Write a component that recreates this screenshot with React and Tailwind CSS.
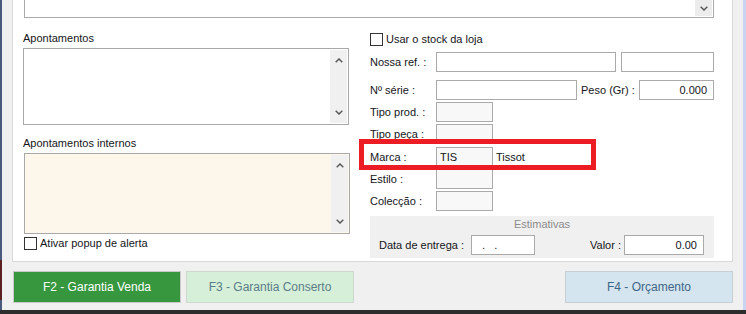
const Chevron = ({ dir = "down" }) => (
  <svg width="8" height="5" viewBox="0 0 8 5" className="block">
    <path
      d={dir === "down" ? "M0.7 0.7 L4 4 L7.3 0.7" : "M0.7 4.3 L4 1 L7.3 4.3"}
      fill="none"
      stroke="#5a5a5a"
      strokeWidth="1.5"
    />
  </svg>
);

const Scroll = () => (
  <div className="w-[17px] h-full bg-[#f0f0f0] flex flex-col items-center justify-between py-[8px]">
    <Chevron dir="up" />
    <Chevron />
  </div>
);

const Check = () => (
  <span className="w-[13px] h-[13px] border border-[#333] bg-white shrink-0" />
);

const Input = ({ w, children, right, gray }) => (
  <div
    className={`h-[20px] border border-[#aaaaaa] flex items-center shrink-0 ${
      gray ? "bg-[#f8f8f8]" : "bg-white"
    } ${right ? "justify-end pr-[6px]" : "pl-[3px]"}`}
    style={{ width: w }}
  >
    {children}
  </div>
);

const Row = ({ label, mt, children }) => (
  <div className={`flex items-center h-[20px] ${mt}`}>
    <span className="w-[66px] shrink-0">{label}</span>
    {children}
  </div>
);

export default function App() {
  return (
    <div className="w-[746px] h-[314px] flex flex-col bg-[#f0f0f0] text-[11px] leading-[14px] text-[#151520] font-['Liberation_Sans',Arial,sans-serif] overflow-hidden">
      <div className="flex flex-1">
        <div className="w-[2px] flex flex-col">
          <div className="h-[260px] bg-[#4a5a7c]" />
          <div className="h-[40px] bg-[#5c2222]" />
          <div className="flex-1 bg-[#4a5a7c]" />
        </div>
        <div className="flex-1 flex flex-col">
          {/* panel */}
          <div className="relative ml-[10px] mr-[10px] h-[262px] bg-white border-x border-b border-[#d9d9d9] flex flex-col">
            {/* top combobox */}
            <div className="ml-[11px] w-[690px] h-[18px] border-x border-b border-[#aaaaaa] flex justify-end pr-px">
              <div className="w-[17px] h-[16px] bg-[#ececec] flex items-center justify-center">
                <Chevron />
              </div>
            </div>
            <div className="flex">
              {/* left column */}
              <div className="ml-[10px] w-[327px] flex flex-col">
                <div className="mt-[13px] h-[14px]">Apontamentos</div>
                <div className="mt-[3px] w-[326px] h-[77px] border border-[#a9a9a9] bg-white flex justify-end p-px">
                  <Scroll />
                </div>
                <div className="mt-[11px] h-[14px]">Apontamentos internos</div>
                <div className="mt-[3px] ml-px w-[326px] h-[81px] border border-[#a9a9a9] bg-[#fdf6ea] flex justify-end p-px">
                  <Scroll />
                </div>
                <div className="mt-[2px] ml-px h-[14px] flex items-center gap-[3px]">
                  <Check />
                  <span>Ativar popup de alerta</span>
                </div>
              </div>
              {/* right column */}
              <div className="ml-[20px] w-[344px] flex flex-col">
                <div className="mt-[14px] h-[14px] flex items-center gap-[3px]">
                  <Check />
                  <span>Usar o stock da loja</span>
                </div>
                <Row label="Nossa ref. :" mt="mt-[6px]">
                  <Input w={180} />
                  <div className="ml-[5px]">
                    <Input w={93} />
                  </div>
                </Row>
                <Row label="Nº série :" mt="mt-[8px]">
                  <Input w={141} />
                  <span className="ml-[4px] w-[58px] shrink-0">Peso (Gr) :</span>
                  <Input w={75} right>
                    0.000
                  </Input>
                </Row>
                <Row label="Tipo prod. :" mt="mt-[2px]">
                  <Input w={57} gray />
                </Row>
                <Row label="Tipo peça :" mt="mt-[2px]">
                  <Input w={57} gray />
                </Row>
                <Row label="Marca :" mt="mt-[3px]">
                  <Input w={57} gray>
                    TIS
                  </Input>
                  <span className="ml-[3px]">Tissot</span>
                </Row>
                <Row label="Estilo :" mt="mt-[2px]">
                  <Input w={57} gray />
                </Row>
                <Row label="Colecção :" mt="mt-[2px]">
                  <Input w={57} gray />
                </Row>
                <div className="mt-[5px] h-[42px] bg-[#f0f0f0] flex flex-col">
                  <div className="mt-[1px] h-[14px] text-center text-[#8c8c8c]">Estimativas</div>
                  <div className="mt-[4px] flex items-center pl-[9px] pr-[10px]">
                    <span className="w-[92px] shrink-0">Data de entrega :</span>
                    <div className="w-[64px] h-[20px] border border-[#aaaaaa] bg-white flex items-center pl-[10px] whitespace-pre">
                      {".   ."}
                    </div>
                    <span className="ml-auto w-[34px] shrink-0">Valor :</span>
                    <Input w={80} right>
                      0.00
                    </Input>
                  </div>
                </div>
              </div>
            </div>
            {/* annotation overlay */}
            <div className="absolute left-[346px] top-[139px] w-[237px] h-[31px] border-[5px] border-[#ec1c24]" />
          </div>
          {/* buttons */}
          <div className="mt-[9px] flex text-[12px] ml-[11px] mr-[10px]">
            <div className="w-[168px] h-[32px] bg-[#36973f] border border-[#c9c9c9] text-white flex items-center justify-center">
              F2 - Garantia Venda
            </div>
            <div className="ml-[5px] w-[168px] h-[32px] bg-[#d6efd8] border border-[#cfd8cf] text-[#5b7d88] flex items-center justify-center">
              F3 - Garantia Conserto
            </div>
            <div className="ml-auto w-[168px] h-[32px] bg-[#d4e5ef] border border-[#c8cfd4] text-[#3f6686] flex items-center justify-center">
              F4 - Orçamento
            </div>
          </div>
        </div>
        <div className="w-[3px] bg-[#c9d5f0]" />
      </div>
      <div className="h-[4px] bg-[#2d2d2d]" />
    </div>
  );
}
